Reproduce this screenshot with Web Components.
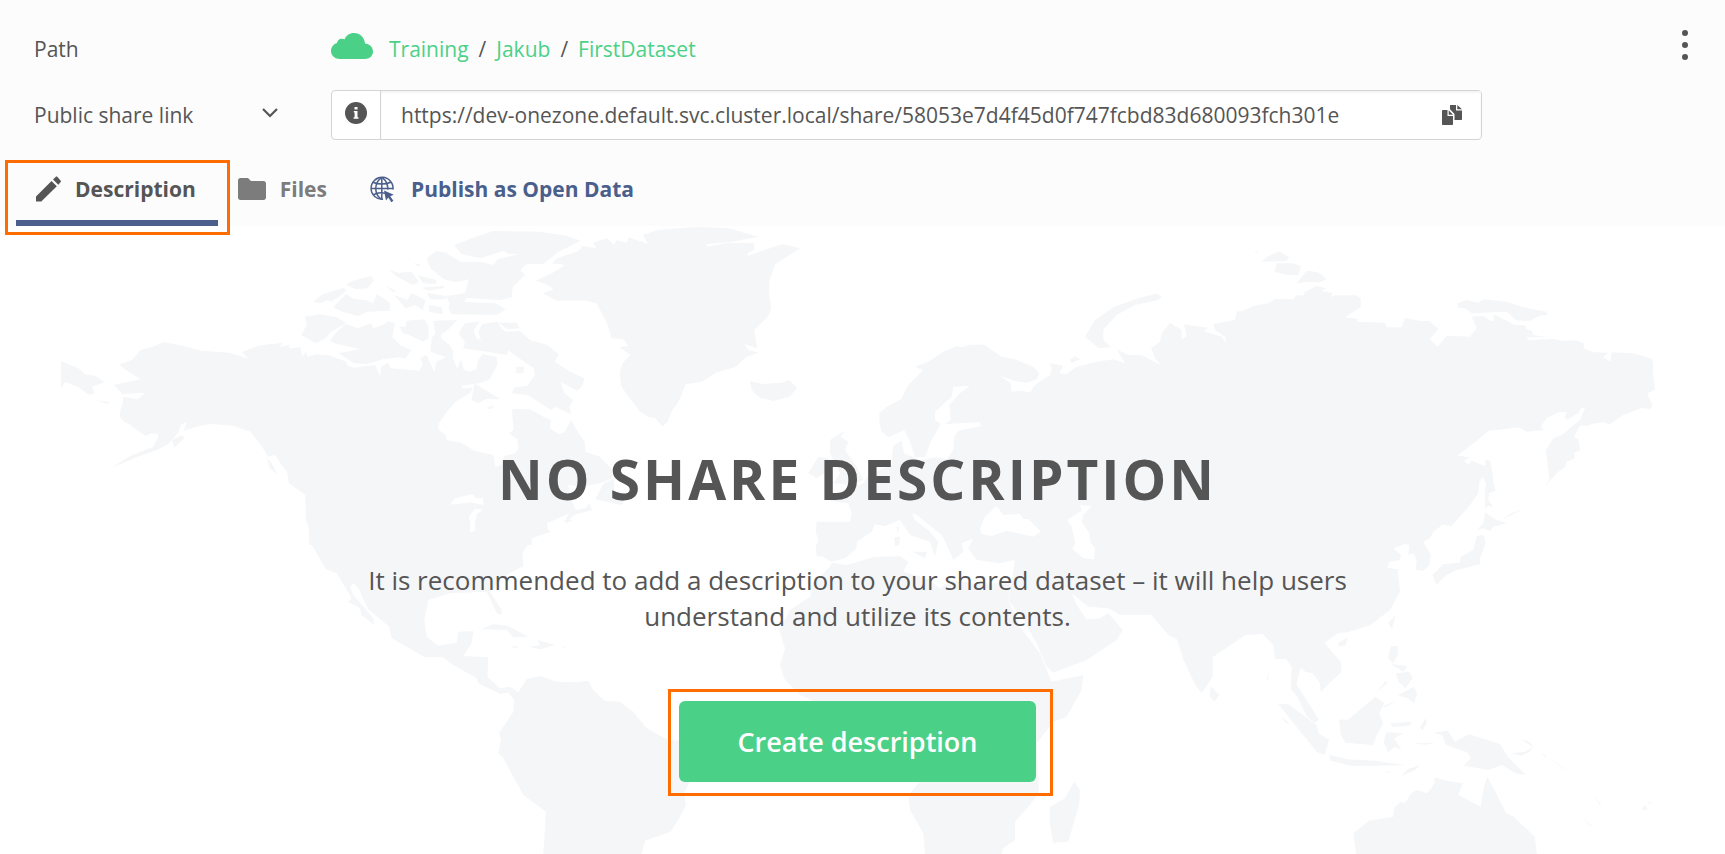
<!DOCTYPE html>
<html lang="en">
<head>
<meta charset="utf-8">
<meta name="viewport" content="width=device-width, initial-scale=1">
<title>Public share</title>
<style>
  html, body {
    height: 100%;
  }

  body {
    margin: 0;
    color: #555;
    background: #fff;
    font-family: "Open Sans", "Noto Sans", sans-serif;
    font-size: 21px;
    --green: #4bd187;
    --blue: #4a5f8c;
    --mark: #ff6c00;
  }
</style>
</head>
<body>
<share-page>
  <share-header slot="header">
    <share-row label="Path">
      <share-path>
        <a href="#training">Training</a>
        <a href="#jakub">Jakub</a>
        <a href="#firstdataset">FirstDataset</a>
      </share-path>
    </share-row>
    <share-link value="https://dev-onezone.default.svc.cluster.local/share/58053e7d4f45d0f747fcbd83d680093fch301e"></share-link>
    <share-tabs slot="tabs">
      <share-tab icon="pencil" active marked>Description</share-tab>
      <share-tab icon="folder">Files</share-tab>
      <share-tab icon="globe" kind="publish">Publish as Open Data</share-tab>
    </share-tabs>
  </share-header>
  <share-empty>
    <span slot="title">No share description</span>
    <span slot="text">It is recommended to add a description to your shared dataset – it will help users understand and utilize its contents.</span>
    <span slot="action">Create description</span>
  </share-empty>
</share-page>

<script>
const ICONS = {
  cloud: `<svg viewBox="0 0 42 26"><path d="M9 26C4 26 0 22.500 0 18c0-4 2.500-7 6-8C6.500 7 9 5 12 6c.6 0 1 .2 1.500.4C15 2.500 18.500 0 23 0c6 0 10.500 4.500 11 10.500C38.500 11 42 14 42 18.500c0 4.500-3.500 7.500-8 7.500z"/></svg>`,
  info: `<svg viewBox="0 0 22 22"><circle cx="11" cy="11" r="11"/><path fill="#fff" d="M9.500 5h3v2.500h-3zM8.800 9h3.700v6.200h1v1.500H8.600v-1.500h1v-4.700h-.8z"/></svg>`,
  chevron: `<svg viewBox="0 0 18 12"><path d="M2 2l7 7 7-7" fill="none" stroke="currentColor" stroke-width="2.200"/></svg>`,
  copy: `<svg viewBox="0 0 20 20"><path d="M0 6c0-.6.3-1 1-1h4.500v6H11v8c0 .6-.4 1-1 1H1c-.6 0-1-.4-1-1z"/><path d="M6.700 5.200V9.800H11zM8.500 0H14v5.500h6V14c0 .6-.4 1-1 1h-6.500V9L8 4.200V1c0-.6 0-1 .5-1zM15.300 0L20 4.300h-4.700z"/></svg>`,
  dots: `<svg viewBox="0 0 6 30"><circle cx="3" cy="3" r="3"/><circle cx="3" cy="15" r="3"/><circle cx="3" cy="27" r="3"/></svg>`,
  pencil: `<svg viewBox="0 0 25 28"><path d="M0 26.500v-5L15.500 6l5.300 5.300L5.300 26.500zM17 4.500L19.600 2c.6-.6 1.300-.6 1.900 0l3 3.400c.6.600.6 1.300 0 1.900l-2.200 2.500z"/></svg>`,
  folder: `<svg viewBox="0 0 28 28"><path d="M2.500 3H10l3 3h12.500C27 6 28 7 28 8.500v14c0 1.500-1 2.500-2.500 2.500h-23C1 25 0 24 0 22.500v-17C0 4 1 3 2.500 3z"/></svg>`,
  globe: `<svg viewBox="0 0 28 28"><g fill="none" stroke="currentColor" stroke-width="1.500"><path d="M14 24.300A11 11 0 1 1 24 14.600M1.800 13.500h22M12.800 2.500v22M4 7.200c5 2.400 12.600 2.400 17.600 0M4 20c3.500-2 9-2.600 12.500-1.600"/><path d="M12 2.800C5 8.500 5 18.500 12 24.200M13.600 2.800c4 3.200 5.400 7.200 5.200 11.800"/></g><path d="M15 15.500l9.800 4.300-3.600 1.400 3.200 4.500-2 1.500-3.100-4.700-2.300 3.100z"/></svg>`
};

class UiIcon extends HTMLElement {
  connectedCallback() {
    this.attachShadow({ mode: "open" }).innerHTML = `
      <style>
        :host {
          display: inline-flex;
          flex: none;
        }
        svg {
          width: 100%;
          height: 100%;
          fill: currentColor;
        }
      </style>
      ${ICONS[this.getAttribute("name")]}
    `;
  }
}

class SharePage extends HTMLElement {
  connectedCallback() {
    this.attachShadow({ mode: "open" }).innerHTML = `
      <style>
        :host {
          display: flex;
          flex-direction: column;
          height: 100%;
          overflow: hidden;
        }
      </style>
      <slot name="header"></slot>
      <slot></slot>
    `;
  }
}

class ShareHeader extends HTMLElement {
  connectedCallback() {
    this.attachShadow({ mode: "open" }).innerHTML = `
      <style>
        :host {
          display: block;
          background: #fcfcfc;
        }
        .top {
          display: flex;
          align-items: flex-start;
          padding: 24px 35px 0 34px;
        }
        .rows {
          flex: 1;
          display: grid;
          gap: 16px;
          padding-right: 198px;
        }
        button {
          display: flex;
          margin: 0;
          padding: 6px 0;
          border: 0;
          color: inherit;
          background: none;
        }
        ui-icon {
          width: 10px;
          height: 30px;
        }
      </style>
      <div class="top">
        <div class="rows"><slot></slot></div>
        <button aria-label="Share actions"><ui-icon name="dots"></ui-icon></button>
      </div>
      <slot name="tabs"></slot>
    `;
  }
}

class ShareRow extends HTMLElement {
  connectedCallback() {
    this.attachShadow({ mode: "open" }).innerHTML = `
      <style>
        :host {
          display: grid;
          grid-template-columns: 297px 1fr;
          align-items: center;
          min-height: 50px;
        }
      </style>
      <span>${this.getAttribute("label")}</span>
      <slot></slot>
    `;
  }
}

class SharePath extends HTMLElement {
  connectedCallback() {
    this.attachShadow({ mode: "open" }).innerHTML = `
      <style>
        :host {
          display: flex;
          align-items: center;
          gap: 16px;
        }
        ui-icon {
          width: 42px;
          height: 26px;
          margin-bottom: 6px;
          color: var(--green);
        }
        nav {
          display: flex;
          gap: 10px;
        }
        a {
          color: var(--green);
          text-decoration: none;
        }
      </style>
      <ui-icon name="cloud"></ui-icon>
      <nav>
        ${[...this.querySelectorAll("a")].map(a => `<a href="${a.getAttribute("href")}">${a.textContent}</a>`).join("<span>/</span>")}
      </nav>
    `;
  }
}

class ShareLink extends HTMLElement {
  connectedCallback() {
    this.attachShadow({ mode: "open" }).innerHTML = `
      <style>
        :host {
          display: grid;
          grid-template-columns: 297px 1fr;
          align-items: center;
        }
        .name {
          display: flex;
          justify-content: space-between;
          align-items: center;
          padding-right: 52px;
        }
        button {
          display: flex;
          margin: 0;
          padding: 0;
          border: 0;
          color: inherit;
          background: none;
        }
        .name ui-icon {
          width: 18px;
          height: 12px;
          margin-bottom: 4px;
        }
        .field {
          display: flex;
          box-sizing: border-box;
          height: 50px;
          border: 1px solid #d4d4d4;
          border-radius: 4px;
          background: #fff;
        }
        .info {
          align-items: center;
          justify-content: center;
          width: 49px;
          border-right: 1px solid #d4d4d4;
        }
        .info ui-icon {
          width: 22px;
          height: 22px;
          margin-bottom: 4px;
        }
        .value {
          flex: 1;
          display: flex;
          box-shadow: inset 0 2px 2px #f4f4f4;
        }
        input {
          flex: 1;
          min-width: 0;
          padding: 0 20px;
          border: 0;
          outline: 0;
          color: inherit;
          background: none;
          font: inherit;
        }
        .copy {
          align-items: center;
          padding: 0 19px;
        }
        .copy ui-icon {
          width: 20px;
          height: 20px;
        }
      </style>
      <div class="name">
        <label for="url">Public share link</label>
        <button aria-label="Change link type"><ui-icon name="chevron"></ui-icon></button>
      </div>
      <div class="field">
        <button class="info" aria-label="About this link"><ui-icon name="info"></ui-icon></button>
        <div class="value">
          <input id="url" type="text" readonly value="${this.getAttribute("value")}">
          <button class="copy" aria-label="Copy link"><ui-icon name="copy"></ui-icon></button>
        </div>
      </div>
    `;

    this.shadowRoot.querySelector(".copy").addEventListener("click", () => {
      this.shadowRoot.querySelector("input").select();
    });
  }
}

class ShareTabs extends HTMLElement {
  connectedCallback() {
    this.attachShadow({ mode: "open" }).innerHTML = `
      <style>
        :host {
          display: block;
          padding: 20px 16px 0;
        }
        nav {
          display: flex;
        }
      </style>
      <nav><slot></slot></nav>
    `;
  }
}

class ShareTab extends HTMLElement {
  connectedCallback() {
    this.attachShadow({ mode: "open" }).innerHTML = `
      <style>
        :host {
          display: block;
          position: relative;
          color: #7c7c7c;
        }
        :host([active]) {
          color: #555;
        }
        :host([kind="publish"]) {
          color: var(--blue);
        }
        a {
          display: flex;
          align-items: center;
          gap: 14px;
          height: 58px;
          padding: 0 22px 2px 20px;
          border-bottom: 6px solid transparent;
          color: inherit;
          font-weight: 700;
          text-decoration: none;
        }
        :host([active]) a {
          border-color: var(--blue);
        }
        ui-icon {
          width: 28px;
          height: 28px;
        }
        ui-icon[name="pencil"] {
          width: 25px;
        }
        :host([marked])::after {
          content: "";
          position: absolute;
          inset: 0 -12px -9px -11px;
          border: 3px solid var(--mark);
          pointer-events: none;
        }
      </style>
      <a href="#"><ui-icon name="${this.getAttribute("icon")}"></ui-icon><slot></slot></a>
    `;
  }
}

class ShareEmpty extends HTMLElement {
  connectedCallback() {
    this.attachShadow({ mode: "open" }).innerHTML = `
      <style>
        :host {
          display: block;
          position: relative;
          flex: 1;
        }
        world-map {
          position: absolute;
          inset: 0;
        }
        .content {
          position: relative;
          display: flex;
          flex-direction: column;
          align-items: center;
          padding: 215px 10px 58px 0;
          text-align: center;
        }
        h1 {
          margin: 0;
          font-size: 55px;
          line-height: 76px;
          font-weight: 700;
          letter-spacing: 3px;
          text-transform: uppercase;
        }
        p {
          max-width: 1000px;
          margin: 45px 0 67px;
          font-size: 26px;
          line-height: 36px;
        }
        .action {
          position: relative;
        }
        button {
          display: block;
          margin: 0;
          padding: 0 59px;
          border: 0;
          border-radius: 6px;
          color: #fff;
          background: var(--green);
          font: inherit;
          font-size: 27px;
          font-weight: 600;
          line-height: 81px;
        }
        .action::after {
          content: "";
          position: absolute;
          inset: -12px -17px -14px -11px;
          border: 3px solid var(--mark);
          pointer-events: none;
        }
      </style>
      <world-map></world-map>
      <div class="content">
        <h1><slot name="title"></slot></h1>
        <p><slot name="text"></slot></p>
        <div class="action"><button><slot name="action"></slot></button></div>
      </div>
    `;
  }
}

class WorldMap extends HTMLElement {
  connectedCallback() {
    this.attachShadow({ mode: "open" }).innerHTML = `
      <style>
        :host {
          display: block;
          overflow: hidden;
        }
        svg {
          display: block;
          width: 100%;
          height: 100%;
          fill: #f5f6f8;
        }
        .water {
          fill: #fff;
        }
      </style>
      <svg viewBox="0 0 1725 628" preserveAspectRatio="xMidYMin slice" aria-hidden="true">
        <!-- North America -->
        <g transform="translate(0 -6) scale(.38265 .33333)">
          <path d="M313 433L345 420 367 390 395 382 428 366 480 378 525 392 600 398 650 416 632 396 680 376 740 368 730 382 755 374 757 386 785 380 790 410 800 395 803 411 825 403 860 406 905 425 908 437 925 443 980 435 994 470 996 440 1015 428 1020 445 1095 452 1105 435 1098 415 1115 405 1135 455 1140 425 1165 412 1125 395 1128 355 1138 340 1132 302 1195 300 1170 330 1152 345 1155 358 1175 375 1185 395 1183 415 1195 445 1205 418 1212 450 1228 455 1245 448 1250 420 1262 402 1298 412 1300 435 1278 480 1250 490 1205 497 1210 505 1235 503 1230 518 1190 545 1165 580 1147 610 1145 628 1165 645 1167 660 1205 668 1240 692 1290 705 1295 740 1310 735 1318 708 1345 700 1355 685 1352 658 1330 640 1342 630 1338 568 1385 568 1420 590 1440 600 1437 625 1460 643 1475 637 1493 600 1510 635 1528 665 1530 695 1568 710 1600 750 1600 775 1568 790 1525 800 1485 795 1490 830 1505 870 1530 865 1540 850 1547 870 1500 885 1480 908 1475 905 1488 880 1430 910 1425 925 1440 935 1390 955 1390 975 808 975 808 925 800 900 798 825 755 790 750 755 735 735 720 705 700 710 685 680 655 635 610 617 550 612 520 618 480 632 488 605 472 615 465 640 440 672 410 690 350 715 290 745 340 708 400 680 414 650 412 642 395 640 380 648 340 615 325 605 313 590 315 570 322 545 320 530 360 538 380 518 320 522 297 495 367 478 345 462 317 440Z"/>
          <path d="M159 422L205 445 222 463 250 468 273 487 240 500 248 520 232 524 205 502 170 485 159 508ZM252 540L287 547 280 552ZM450 660L475 645 482 655 455 684ZM697 712L710 730 725 762 705 745Z"/>
          <path d="M797 290L835 283 880 292 905 310 865 335 850 355 825 370 787 345 802 315Z"/>
          <path d="M905 312L935 325 970 310 975 325 1000 315 1015 303 1032 310 1025 350 1045 375 1075 390 1060 415 1040 412 1000 418 960 432 925 430 885 400 940 388 875 370 862 362 880 335ZM1045 320L1060 320 1062 302 1110 298 1120 320 1120 355 1105 365 1070 345 1052 340Z"/>
          <path d="M817 245L845 222 900 203 905 212 880 235 865 245 855 240 840 250ZM870 262L905 222 925 237 955 240 975 250 985 222 1020 250 1018 272 960 275 935 288 895 275ZM905 195L920 183 970 168 977 182 960 205 930 208ZM1017 150L1040 158 1075 155 1095 185 1080 195 1040 172ZM1092 165L1140 180 1140 192 1105 190ZM1030 225L1065 240 1075 220 1112 240 1105 270 1085 255 1060 265ZM1115 218L1165 228 1165 238 1125 238ZM1120 255L1155 262 1158 283 1122 275ZM1100 203L1160 197 1162 203 1120 212ZM1010 197L1035 213 1027 217ZM1080 130L1098 132 1095 140Z"/>
          <path d="M1187 75L1235 53 1290 33 1410 35 1480 47 1518 62 1460 95 1420 132 1375 133 1360 150 1372 165 1340 200 1337 232 1307 240 1220 234 1213 246 1295 250 1322 268 1300 284 1180 283 1172 265 1175 250 1165 228 1215 220 1225 178 1190 187 1160 178 1125 145 1115 115 1140 93 1165 98 1205 127 1255 125 1290 135 1300 118 1358 102 1330 102 1315 93 1255 115 1205 102Z"/>
          <path d="M1198 340L1215 310 1255 304 1238 330 1245 355 1257 360 1250 335 1260 312 1300 305 1310 325 1320 335 1360 333 1385 360 1430 375 1460 403 1450 425 1490 455 1528 475 1520 500 1508 512 1465 485 1475 520 1498 540 1488 560 1492 583 1450 560 1440 570 1380 525 1337 520 1345 502 1378 498 1398 465 1395 445 1345 405 1328 390 1325 405 1255 392 1210 385 1215 365ZM1303 308L1350 308 1358 325 1325 327ZM1240 490L1275 515 1308 538 1270 537 1250 550 1232 540ZM1350 440L1370 440 1368 460 1348 460ZM1270 565L1290 555 1285 568Z"/>
          <path class="water" d="M1178 850L1190 835 1235 822 1245 835 1262 835 1264 855 1230 847 1180 854ZM1228 937L1226 890 1240 868 1262 868 1245 885 1242 930Z"/>
        </g>

        <!-- Greenland, Iceland, Newfoundland -->
        <g transform="translate(300 -6) scale(.35714 .33333)">
          <path d="M660 182L705 160 740 137 735 133 705 130 720 115 780 93 790 78 830 85 820 68 860 55 880 75 885 60 915 68 920 52 975 72 960 45 1000 30 1110 20 1200 25 1283 50 1210 65 1140 72 1140 80 1200 68 1272 70 1272 90 1252 100 1255 107 1350 72 1400 85 1330 133 1315 180 1313 220 1320 265 1310 290 1272 330 1280 385 1245 372 1255 390 1285 398 1250 410 1220 440 1165 458 1125 485 1080 493 1060 545 1040 575 1030 605 1015 620 995 595 975 590 950 573 900 500 895 460 903 430 925 405 895 382 920 378 905 358 872 355 860 310 830 250 800 242 720 242 680 220 710 208 690 193Z"/>
          <path d="M1260 483L1295 492 1350 488 1370 480 1392 505 1370 530 1325 543 1285 532 1265 510ZM827 838L850 790 880 775 880 810 910 840 900 855Z"/>
        </g>

        <!-- Europe and Asia -->
        <g transform="translate(820 -6) scale(.33333)">
          <path d="M178 580L200 560 243 538 265 495 310 450 285 440 325 425 370 395 410 378 425 382 450 374 493 374 545 410 585 418 640 440 658 460 650 478 620 488 585 483 540 467 572 490 575 515 600 512 630 517 645 495 690 465 695 445 690 430 730 437 718 460 740 462 770 440 830 425 880 418 915 430 890 388 925 405 965 405 1022 435 1005 415 993 385 1020 365 1025 340 1050 308 1085 330 1085 360 1100 348 1092 313 1165 323 1150 333 1205 350 1218 370 1215 350 1185 330 1180 312 1245 300 1250 275 1275 270 1300 258 1345 250 1365 237 1420 238 1430 225 1450 227 1455 215 1490 198 1520 205 1505 212 1540 220 1530 232 1545 226 1610 226 1622 235 1622 262 1575 292 1615 297 1610 305 1695 308 1700 322 1745 322 1755 294 1800 303 1828 303 1855 327 1830 358 1853 380 1880 347 1950 350 1970 325 1955 290 1990 287 2010 302 2022 302 2020 282 2060 302 2085 315 2115 316 2120 328 2135 332 2140 345 2185 352 2120 352 2125 360 2200 357 2230 363 2265 361 2290 368 2292 385 2320 397 2365 398 2350 412 2372 425 2375 397 2440 400 2495 416 2500 430 2498 450 2505 510 2482 520 2498 558 2490 567 2465 564 2410 585 2370 613 2350 607 2315 612 2300 618 2280 616 2262 652 2275 658 2280 690 2262 700 2265 715 2240 725 2235 742 2215 755 2175 797 2188 778 2178 690 2200 655 2225 645 2280 600 2295 565 2285 562 2275 580 2240 600 2235 590 2240 577 2215 577 2180 595 2162 620 2172 630 2120 635 2095 622 2050 628 2005 632 1980 655 1912 707 1950 712 1932 722 1945 735 1955 722 1995 738 1997 718 2010 722 2018 760 2020 785 2027 812 2008 820 2005 840 2020 862 2005 857 1996 867 1995 820 1998 790 1988 770 1978 785 1975 820 1950 855 1895 918 1868 914 1840 935 1830 955 1810 965 1832 1005 1828 1035 1810 1052 1788 1050 1790 1020 1780 1000 1765 1005 1768 975 1755 972 1720 985 1743 1005 1740 1020 1710 1025 1701 1043 1733 1048 1740 1115 1710 1170 1652 1215 1583 1237 1554 1240 1513 1268 1562 1325 1565 1355 1502 1415 1500 1390 1478 1360 1456 1355 1442 1343 1429 1392 1479 1470 1496 1500 1484 1508 1461 1490 1432 1430 1413 1408 1415 1340 1398 1317 1365 1317 1360 1275 1328 1242 1276 1245 1178 1312 1178 1370 1145 1420 1126 1395 1091 1320 1071 1258 1045 1245 993 1184 900 1184 865 1165 805 1160 755 1120 770 1155 800 1198 840 1195 865 1180 908 1230 890 1260 800 1320 700 1358 680 1340 650 1270 610 1200 565 1140 575 1085 585 1020 540 1030 470 1020 445 985 460 955 425 970 430 995 400 1020 385 985 365 945 290 885 275 880 285 900 325 930 355 965 345 1010 330 965 270 945 240 900 195 918 165 912 155 935 110 965 110 985 75 1015 35 1025 10 1010 -10 1008 -13 980 -5 960 -13 935 -10 905 90 905 95 880 85 850 30 842 80 810 130 790 145 765 215 735 218 690 222 675 245 662 252 700 300 720 350 712 380 718 400 690 403 650 415 632 483 618 480 607 375 612 392 600 388 555 420 520 450 497 400 500 395 530 345 575 345 600 362 612 335 660 315 710 285 712 270 665 253 630 205 652 185 635 178 605Z"/>
          <path class="water" d="M480 925L495 890 530 858 550 885 600 882 610 897 625 897 662 935 640 950 560 932 515 948 485 942ZM742 900L785 872 780 855 815 858 790 885 785 905 808 940 810 965 825 985 822 1018 790 1015 758 988 765 965 755 920Z"/>
          <path d="M795 350L825 300 880 262 945 238 1010 220 1025 230 1015 240 945 255 890 285 850 330 850 360 875 382 835 384ZM750 420L765 408 780 418 755 430ZM30 660L75 632 62 650 85 665 75 690 110 740 130 780 100 795 40 790 60 760 30 700ZM-35 760L-5 710 25 715 20 755 -10 775Z"/>
          <path d="M1325 125L1345 108 1378 94 1408 112 1398 124ZM1363 155L1370 130 1415 130 1443 138 1435 165 1400 165ZM1430 190L1460 152 1495 157 1520 177 1500 187 1465 186ZM1300 96L1316 95 1314 100ZM1913 250L1940 240 1975 248 1990 238 2060 245 2110 262 2180 275 2182 285 2160 287 2130 302 2090 302 2060 275 1955 280 1935 265 1913 263Z"/>
          <path d="M1995 877L2025 898 2060 910 2020 920 2010 933 1990 925 1970 930 1990 910ZM1970 948L1990 945 1997 968 1980 1015 1980 1032 1905 1052 1880 1065 1849 1095 1838 1065 1870 1033 1920 1028 1922 1010 1960 990ZM2040 902L2075 880 2110 865 2085 880Z"/>
        </g>

        <!-- Central and South America -->
        <g transform="translate(300 294) scale(.33333)">
          <path d="M655 517L680 478 720 468 770 485 830 487 865 482 880 510 915 543 960 545 1000 575 1040 625 1105 660 1150 662 1200 750 1168 790 1152 820 1158 855 1140 890 1112 935 1035 962 1025 1002 730 1002 738 875 670 825 610 715 595 700 603 660 597 640 640 575 642 540 625 518 600 522 535 490 530 475 455 432 430 412 375 412 275 355 267 320 205 268 175 205 160 190 150 200 160 225 220 295 222 315 185 285 180 265 145 245 155 235 110 160 78 148 30 65 25 20 20 0 755 0 740 10 745 35 695 55 667 100 670 137 620 165 570 215 605 270 605 285 590 280 572 240 560 215 450 220 385 240 373 300 380 350 415 377 470 368 475 335 520 333 515 370 490 408 565 412 562 470 600 505 630 500Z"/>
          <path d="M543 328L580 312 625 318 685 350 640 352 620 330ZM685 380L720 376 712 360 765 375 722 388ZM632 378L655 380 645 386ZM780 379L800 380 790 383ZM792 0L820 0 800 9Z"/>
          <path class="water" d="M510 0L526 0 524 32 510 38Z"/>
        </g>

        <!-- Africa -->
        <g transform="translate(640 294) scale(.33333)">
          <path d="M575 128L620 135 700 112 780 108 805 125 790 155 860 175 900 205 930 180 1000 190 1110 190 1105 240 1140 320 1200 400 1235 485 1330 465 1325 510 1280 590 1240 605 1190 670 1197 820 1165 860 1125 905 1125 960 1090 985 1085 1002 855 1002 850 940 810 870 805 825 840 785 820 700 690 543 520 543 480 525 435 480 420 435 435 385 418 330 450 270 510 230 520 190 570 140Z"/>
          <path d="M1230 860L1275 835 1303 785 1320 810 1318 850 1285 965 1240 968 1230 915ZM817 95L860 95 855 115ZM763 52L780 50 778 75 765 78ZM770 20L777 22 773 42Z"/>
        </g>

        <!-- South-east Asia and Oceania -->
        <g transform="translate(1120 294) scale(.38585 .33333)">
          <path d="M235 497L257 525 245 545 233 530ZM410 552L435 552 510 615 515 640 542 660 530 705 510 695 450 610ZM543 705L590 718 660 722 740 736 600 738 545 722ZM568 598L590 600 662 530 685 548 672 580 682 610 668 640 655 675 585 668 572 645ZM690 637L735 640 710 655 730 690 712 680 695 697 683 668ZM702 610L758 605 750 618 705 620ZM778 620L792 595 795 610 783 632ZM695 308L715 285 705 328ZM565 370L590 352 585 375 570 380ZM380 485L386 443 384 480Z"/>
          <path d="M812 638L850 632 868 665 905 643 985 672 1005 710 1052 765 1025 760 990 735 955 750 890 737 910 715 900 697 845 675 835 645ZM1015 700L1050 695 1070 680 1062 695 1040 707ZM702 378L720 378 720 405 708 430 695 415ZM702 432L745 438 735 455ZM715 460L750 455 758 475 740 505 722 485ZM665 518L690 480 690 492ZM720 525L762 500 770 520 762 550 745 535ZM680 560L720 540 690 560ZM730 768L745 748 778 735 765 750ZM684 752L706 756 695 759ZM760 670L820 668 790 674Z"/>
          <path d="M612 1002L605 940 645 902 708 890 710 865 727 845 738 850 755 820 770 810 797 820 815 790 815 772 850 783 888 790 877 825 935 860 943 800 952 770 975 820 1000 878 1020 890 1075 950 1080 1002Z"/>
          <path d="M1200 897L1230 925 1215 915ZM1353 862L1362 857 1368 868 1356 870ZM1365 850L1382 844 1375 850ZM1092 697L1110 715 1100 710ZM1115 715L1180 768 1140 738ZM1230 825L1250 862 1240 850ZM1040 658L1075 685 1060 665ZM418 588L440 612 430 608Z"/>
        </g>
      </svg>
    `;
  }
}

customElements.define("ui-icon", UiIcon);
customElements.define("world-map", WorldMap);
customElements.define("share-page", SharePage);
customElements.define("share-header", ShareHeader);
customElements.define("share-row", ShareRow);
customElements.define("share-path", SharePath);
customElements.define("share-link", ShareLink);
customElements.define("share-tabs", ShareTabs);
customElements.define("share-tab", ShareTab);
customElements.define("share-empty", ShareEmpty);
</script>
</body>
</html>
